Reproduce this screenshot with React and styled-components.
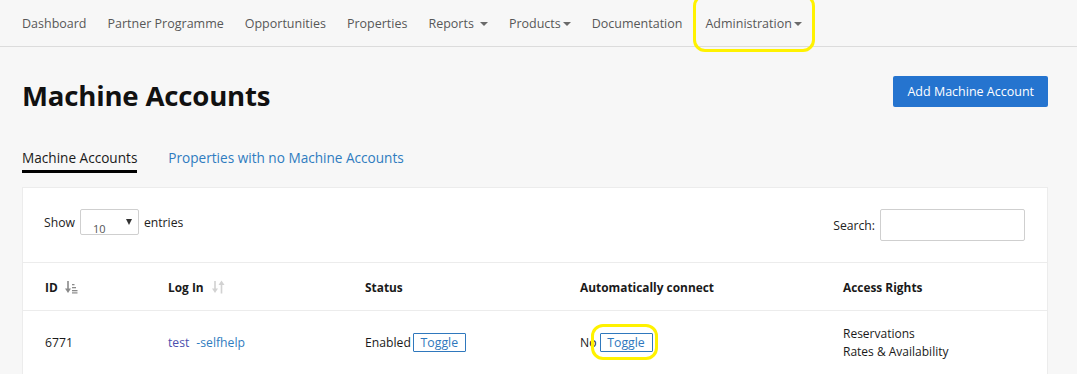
import React from "react";
import styled, { createGlobalStyle, css } from "styled-components";

const GlobalStyle = createGlobalStyle`
  body {
    margin: 0;
    background: #f7f7f7;
    font-family: "Open Sans", "Noto Sans", sans-serif;
    color: #222;
  }
`;

const yellowRing = css`
  &::after {
    content: "";
    position: absolute;
    border: 3px solid #fff200;
    border-radius: 12px;
    pointer-events: none;
  }
`;

const Nav = styled.nav`
  display: flex;
  align-items: center;
  height: 46px;
  padding-left: 22px;
  gap: 21px;
  border-bottom: 1px solid #dcdcdc;
`;

const NavItem = styled.div`
  position: relative;
  display: flex;
  align-items: center;
  gap: ${(p) => (p.$tight ? "2px" : "6px")};
  font-size: 12.5px;
  color: #585858;
  cursor: pointer;
  ${(p) =>
    p.$marked &&
    css`
      margin-left: 2px;
      ${yellowRing}
      &::after {
        top: -21px;
        bottom: -20px;
        left: -12px;
        right: -13px;
      }
    `}
`;

const Caret = styled.span`
  width: 0;
  height: 0;
  border-left: 4px solid transparent;
  border-right: 4px solid transparent;
  border-top: 4px solid #6a6a6a;
  margin-top: 2px;
`;

const Header = styled.div`
  display: flex;
  justify-content: space-between;
  align-items: flex-start;
  padding: 29px 29px 0 22px;
`;

const Title = styled.h1`
  margin: 0;
  font-size: 27.6px;
  line-height: 38px;
  font-weight: 700;
  color: #111;
  letter-spacing: -0.2px;
`;

const PrimaryButton = styled.button`
  height: 31px;
  padding: 0 14px;
  background: #2574cf;
  border: none;
  border-radius: 2px;
  color: #fff;
  font-family: inherit;
  font-size: 12.5px;
`;

const Tabs = styled.div`
  display: flex;
  gap: 31px;
  padding: 34px 22px 0;
`;

const Tab = styled.div`
  font-size: 13.6px;
  padding-bottom: 3px;
  color: ${(p) => (p.$active ? "#1a1a1a" : "#2f7cc0")};
  border-bottom: 3px solid ${(p) => (p.$active ? "#000" : "transparent")};
`;

const Panel = styled.div`
  margin: 14px 29px 0 22px;
  background: #fff;
  border: 1px solid #ececec;
`;

const Toolbar = styled.div`
  display: flex;
  justify-content: space-between;
  align-items: flex-start;
  padding: 21px 22px 21px 21px;
  border-bottom: 1px solid #ececec;
  font-size: 12.2px;
  color: #222;
`;

const Group = styled.label`
  display: flex;
  align-items: center;
  gap: ${(p) => p.$gap || 5}px;
  height: ${(p) => p.$h || 26}px;
`;

const FakeSelect = styled.div`
  position: relative;
  width: 57px;
  height: 24px;
  border: 1px solid #cfcfcf;
  border-radius: 2px;
  overflow: hidden;
  font-size: 11px;
  color: #555;
  span {
    position: absolute;
    left: 12px;
    top: 11px;
  }
  &::after {
    content: "";
    position: absolute;
    right: 6px;
    top: 9px;
    border-left: 3.5px solid transparent;
    border-right: 3.5px solid transparent;
    border-top: 6px solid #333;
  }
`;

const SearchInput = styled.div`
  width: 143px;
  height: 30px;
  border: 1px solid #cfcfcf;
  border-radius: 2px;
`;

const Row = styled.div`
  display: grid;
  grid-template-columns: 123px 197px 215px 263px 1fr;
  align-items: center;
  padding-left: 22px;
  height: ${(p) => p.$h}px;
  border-bottom: 1px solid #ececec;
  font-size: ${(p) => (p.$head ? 11.9 : 12.2)}px;
  font-weight: ${(p) => (p.$head ? 700 : 400)};
  color: #1a1a1a;
`;

const Cell = styled.div`
  display: flex;
  align-items: center;
  gap: ${(p) => p.$gap || 0}px;
`;

const Lines = styled.div`
  line-height: 18px;
  font-size: 12px;
`;

const Link = styled.span`
  color: ${(p) => (p.$visited ? "#4b4fae" : "#2f7cc0")};
  margin-right: ${(p) => p.$space || 0}px;
`;

const ToggleWrap = styled.span`
  position: relative;
  display: inline-flex;
  ${(p) =>
    p.$marked &&
    css`
      ${yellowRing}
      &::after {
        top: -9px;
        bottom: -8px;
        left: -9px;
        right: -5px;
        border-width: 3.5px;
      }
    `}
`;

const ToggleButton = styled.button`
  height: 19px;
  width: 53px;
  padding: 0;
  background: #fff;
  border: 1px solid #2f78bd;
  border-radius: 1px;
  color: #2f78bd;
  font-family: inherit;
  font-size: 12.3px;
  line-height: 17px;
`;

const SortedIcon = () => (
  <svg width="13" height="14" viewBox="0 0 13 14">
    <g fill="#8a8a8a">
      <rect x="2.2" y="1" width="1.6" height="9" />
      <path d="M0 8.5h6l-3 4.5z" />
      <rect x="7" y="4" width="2.5" height="1.3" />
      <rect x="7" y="7" width="4" height="1.3" />
      <rect x="7" y="10" width="5.5" height="1.3" />
      <rect x="7" y="12.3" width="5.5" height="1.2" />
    </g>
  </svg>
);

const SortIcon = () => (
  <svg width="13" height="14" viewBox="0 0 13 14">
    <g fill="#d2d2d2">
      <rect x="2.2" y="1" width="1.6" height="9" />
      <path d="M0 8.5h6l-3 4.5z" />
      <rect x="8.7" y="4" width="1.6" height="9.5" />
      <path d="M6.5 5h6l-3-4.5z" />
    </g>
  </svg>
);

const navItems = [
  { label: "Dashboard" },
  { label: "Partner Programme" },
  { label: "Opportunities" },
  { label: "Properties" },
  { label: "Reports", caret: true },
  { label: "Products", caret: true, tight: true },
  { label: "Documentation" },
  { label: "Administration", caret: true, tight: true, marked: true },
];

const App = () => {
  return (
    <>
      <GlobalStyle />
      <Nav>
        {navItems.map((item) => (
          <NavItem key={item.label} $tight={item.tight} $marked={item.marked}>
            {item.label}
            {item.caret && <Caret />}
          </NavItem>
        ))}
      </Nav>
      <Header>
        <Title>Machine Accounts</Title>
        <PrimaryButton>Add Machine Account</PrimaryButton>
      </Header>
      <Tabs>
        <Tab $active>Machine Accounts</Tab>
        <Tab>Properties with no Machine Accounts</Tab>
      </Tabs>
      <Panel>
        <Toolbar>
          <Group>
            Show
            <FakeSelect>
              <span>10</span>
            </FakeSelect>
            entries
          </Group>
          <Group $h={32}>
            Search:
            <SearchInput />
          </Group>
        </Toolbar>
        <Row $head $h={47}>
          <Cell $gap={7}>
            ID <SortedIcon />
          </Cell>
          <Cell $gap={8}>
            Log In <SortIcon />
          </Cell>
          <Cell>Status</Cell>
          <Cell>Automatically connect</Cell>
          <Cell>Access Rights</Cell>
        </Row>
        <Row $h={63}>
          <Cell>6771</Cell>
          <Cell>
            <Link $visited $space={7}>
              test
            </Link>
            <Link>-selfhelp</Link>
          </Cell>
          <Cell $gap={2}>
            Enabled
            <ToggleWrap>
              <ToggleButton>Toggle</ToggleButton>
            </ToggleWrap>
          </Cell>
          <Cell $gap={3}>
            No
            <ToggleWrap $marked>
              <ToggleButton>Toggle</ToggleButton>
            </ToggleWrap>
          </Cell>
          <Lines>
            Reservations
            <br />
            Rates &amp; Availability
          </Lines>
        </Row>
      </Panel>
    </>
  );
};

export default App;
